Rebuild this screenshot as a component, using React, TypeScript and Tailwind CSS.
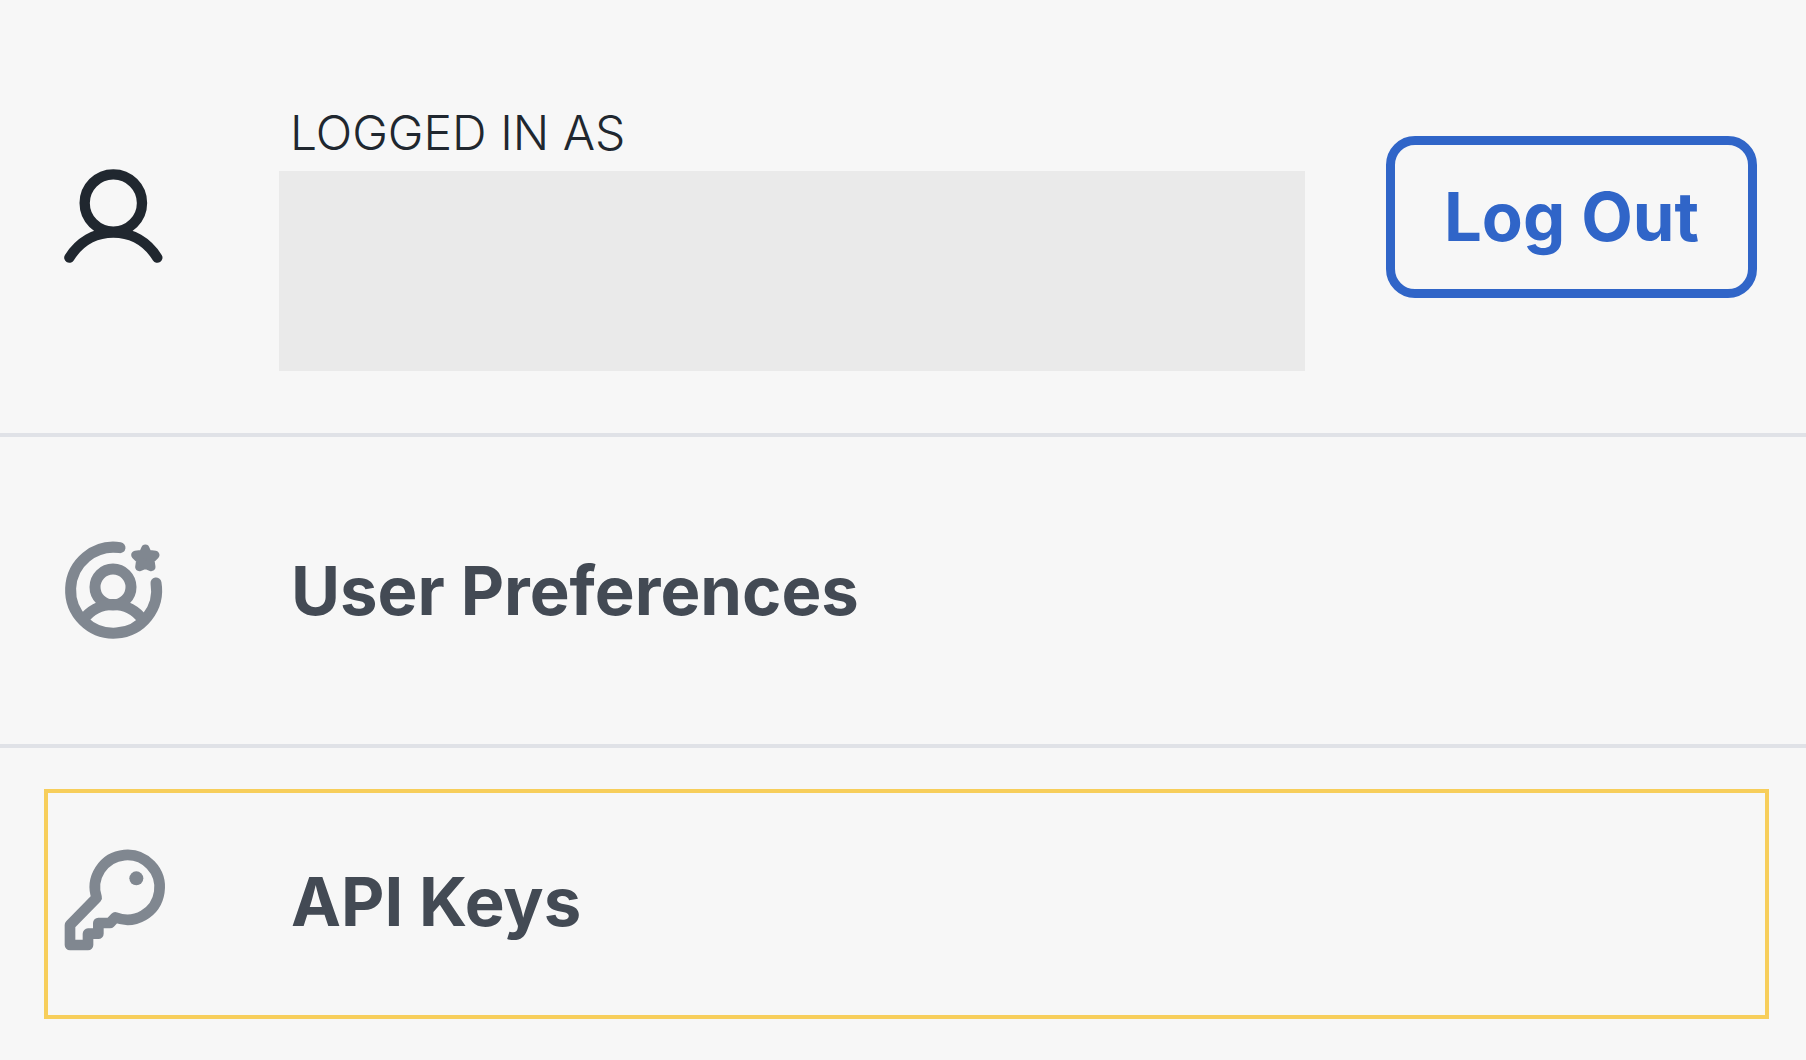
import type { ReactNode } from "react";

// ── Icons ─────────────────────────────────────────────────────────────────────

interface IconProps {
    className?: string;
}

function UserIcon({ className }: IconProps) {
    return (
        <svg
            className={className}
            viewBox="0 0 312 312"
            fill="none"
            stroke="currentColor"
            strokeWidth={31}
            strokeLinecap="round"
            aria-hidden="true"
        >
            <circle cx="154" cy="114" r="86" />
            <path d="M22 278C52 231 98 203 154 203S256 231 286 278" />
        </svg>
    );
}

function UserPreferencesIcon({ className }: IconProps) {
    return (
        <svg
            className={className}
            viewBox="0 0 312 312"
            fill="none"
            stroke="currentColor"
            strokeWidth={33}
            strokeLinecap="round"
            strokeLinejoin="round"
            aria-hidden="true"
        >
            <path d="M174 26A129 129 0 1 0 282 132" />
            <circle cx="153" cy="144" r="54" />
            <path d="M64 242A110 110 0 0 1 242 242" />
            <path
                d="M250 29L257 45L280 48L265 63L268 84L250 77L232 84L235 63L220 48L243 45Z"
                fill="currentColor"
                strokeWidth={25}
            />
        </svg>
    );
}

function KeyIcon({ className }: IconProps) {
    return (
        <svg
            className={className}
            viewBox="0 0 312 312"
            fill="none"
            stroke="currentColor"
            strokeWidth={32}
            strokeLinecap="round"
            strokeLinejoin="round"
            overflow="visible"
            aria-hidden="true"
        >
            <path d="M104 143L24 225V285H78V251H109V219H144L160 202A97 97 0 1 0 104 143Z" />
            <circle cx="223" cy="85" r="21" fill="currentColor" stroke="none" />
        </svg>
    );
}

// ── Menu row ──────────────────────────────────────────────────────────────────

interface MenuRowProps {
    icon: ReactNode;
    label: string;
    highlighted?: boolean;
}

function MenuRow({ icon, label, highlighted = false }: MenuRowProps) {
    return (
        <li className="relative">
            <a
                href="#"
                className="flex h-[307px] items-center gap-[125px] pl-[62px] text-[67px] leading-[80px] font-bold text-[#434a54]"
            >
                {icon}
                {label}
            </a>
            {highlighted && (
                <span className="pointer-events-none absolute top-[41px] right-[37px] bottom-[36px] left-[44px] border-4 border-[#f7ce5b]" />
            )}
        </li>
    );
}

// ── Account menu ──────────────────────────────────────────────────────────────

export default function App() {
    return (
        <main className="min-h-screen bg-[#f7f7f7] font-['Inter',sans-serif]">
            <header className="flex items-center border-b-4 border-[#e0e2e7] pr-[49px] pl-[62px]">
                <UserIcon className="size-[104px] shrink-0 text-[#20272f]" />
                <div className="ml-[113px] flex-1 pt-[105px] pb-[62px]">
                    <p className="mb-[10px] pl-[11px] text-[48px] leading-[56px] font-light text-[#20272f]">
                        LOGGED IN AS
                    </p>
                    <div className="h-[200px] bg-[#eaeaea]" />
                </div>
                <button
                    type="button"
                    className="ml-[81px] h-[162px] w-[371px] shrink-0 rounded-[29px] border-9 border-[#3065c8] text-[67px] leading-[80px] font-bold text-[#3065c8]"
                >
                    Log Out
                </button>
            </header>

            <nav aria-label="Account">
                <ul className="divide-y-4 divide-[#e0e2e7]">
                    <MenuRow
                        icon={<UserPreferencesIcon className="size-[104px] shrink-0 text-[#808790]" />}
                        label="User Preferences"
                    />
                    <MenuRow
                        icon={<KeyIcon className="size-[104px] shrink-0 text-[#808790]" />}
                        label="API Keys"
                        highlighted
                    />
                </ul>
            </nav>
        </main>
    );
}
